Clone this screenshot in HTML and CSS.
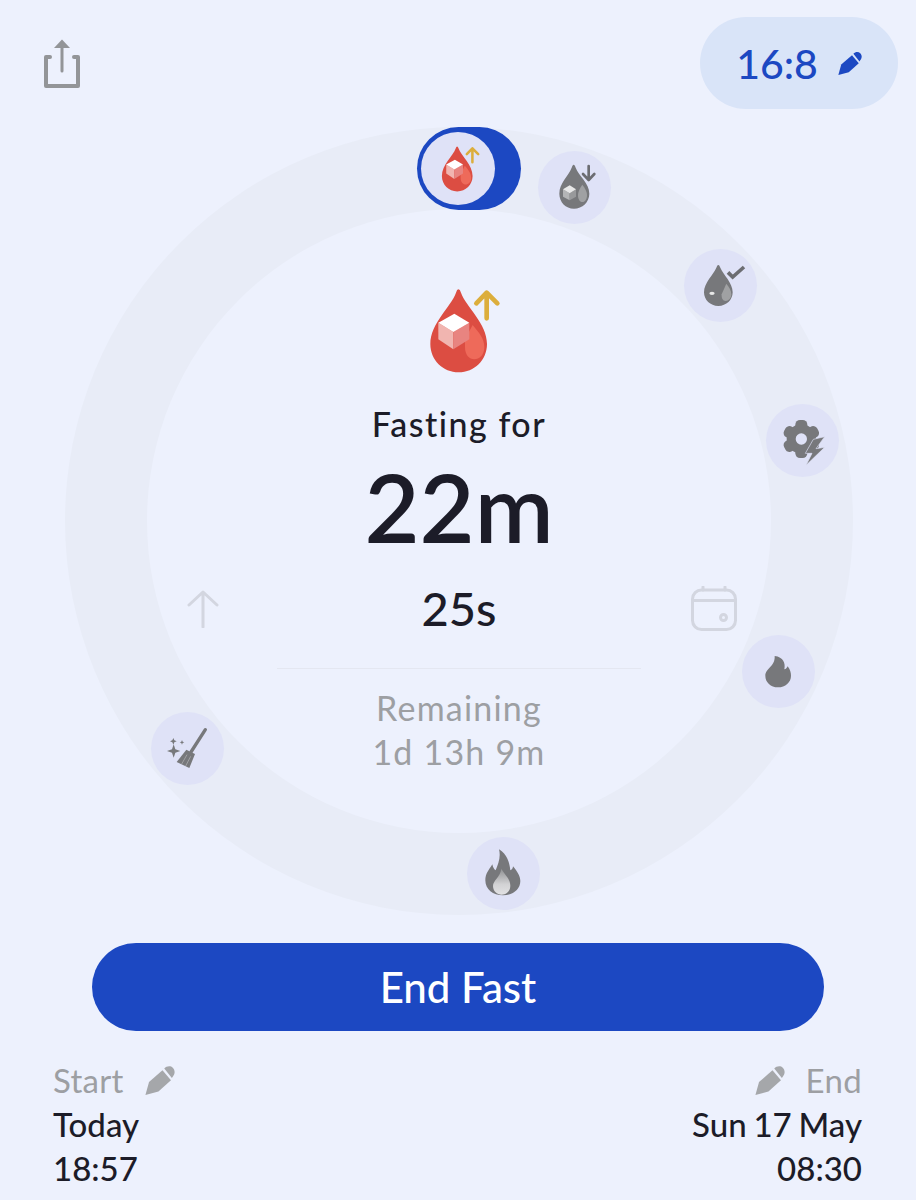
FILE: index.html
```html
<!DOCTYPE html>
<html lang="en">

<head>
    <meta charset="UTF-8">
    <meta name="viewport" content="width=device-width, initial-scale=1.0">
    <title>Fasting Timer</title>
    <link rel="stylesheet" href="styles.css">
</head>

<body>
    <svg class="defs" width="0" height="0">
        <defs>
            <linearGradient id="flame-glow" x1="0" y1="0" x2="0" y2="1">
                <stop offset="0" stop-color="#8f9092" />
                <stop offset="0.6" stop-color="#d2d2d4" />
                <stop offset="1" stop-color="#e2e2e4" />
            </linearGradient>
        </defs>
        <symbol id="pencil" viewBox="0 0 67 67">
            <path d="M1 67 L9 38 L39 12 L58 34 L30 59 Z" />
            <path d="M43 8 C48 2 57 1 62 6 C68 12 67 20 62 26 L60 29 Z" />
        </symbol>
        <symbol id="drop" viewBox="0 0 360 360">
            <path class="drop-body" d="M172 58 Q177 58 180 68 C195 110 258 160 258 222 C258 270 220 307 173 307 C126 307 88 270 88 222 C88 160 150 110 165 68 Q168 58 172 58 Z" />
            <path class="drop-side" d="M215 165 C235 190 250 205 250 232 C250 255 235 268 220 268 C205 268 192 255 192 232 L192 208 Z" />
            <path class="cube-left" d="M112 158 L157 186 L157 238 L112 208 Z" />
            <path class="cube-right" d="M157 186 L205 158 L205 208 L157 238 Z" />
            <path class="cube-top" d="M112 158 L160 131 L205 158 L157 186 Z" />
        </symbol>
    </svg>

    <div class="top-bar">
        <svg class="share" viewBox="40 36 44 56">
            <path class="share-box" d="M50 57 H46 V86 H78 V57 H74" />
            <path class="share-stem" d="M62 71 V45" />
            <path class="share-head" d="M62 39.5 L70 48 H54 Z" />
        </svg>
        <div class="plan">
            <span>16:8</span>
            <svg class="pencil-blue"><use href="#pencil" /></svg>
        </div>
    </div>

    <div class="ring">
        <div class="hole">
            <svg class="big-drop" viewBox="0 0 360 360">
                <use href="#drop" class="red" />
                <path class="arrow-gold" d="M257 145 V72 M226 100 L257 68 L289 100" />
            </svg>
            <div class="label">Fasting for</div>
            <div class="elapsed">22m</div>
            <div class="seconds">25s</div>
            <div class="divider"></div>
            <div class="remaining">Remaining</div>
            <div class="remaining">1d 13h 9m</div>
        </div>

        <svg class="hint hint-up" viewBox="0 0 32 38">
            <path d="M16 37 V2 M2 15 L16 2 L30 15" />
        </svg>
        <svg class="hint hint-calendar" viewBox="0 0 46 45">
            <rect x="1.5" y="4" width="43" height="39.5" rx="9" />
            <path d="M1.5 14.5 H44.5 M12 1 V4 M34 1 V4" />
            <circle cx="32.5" cy="31.5" r="3" />
        </svg>

        <div class="active-pill">
            <div class="active-dot">
                <svg class="small-drop" viewBox="0 0 360 360">
                    <use href="#drop" class="red" />
                    <path class="arrow-gold" d="M257 145 V72 M226 100 L257 68 L289 100" />
                </svg>
            </div>
        </div>

        <div class="node node-1">
            <svg viewBox="0 0 219 219">
                <path class="grey-fill" d="M107 41 C110 41 111 45 113 50 C122 75 154 95 154 128 C154 153 133 173 108 173 C83 173 64 153 64 128 C64 95 92 75 101 50 C103 45 104 41 107 41 Z" />
                <path class="grey-light" d="M133 101 C142 113 147 122 147 132 C147 145 141 153 133 153 C125 153 120 145 120 132 C120 122 125 113 133 101 Z" />
                <path class="grey-pale" d="M75 115 L95 127 L95 148 L75 137 Z" />
                <path class="grey-mid" d="M95 127 L114 115 L114 137 L95 148 Z" />
                <path class="white-fill" d="M75 115 L95 103 L114 115 L95 127 Z" />
                <path class="down-arrow" d="M152 45 V86 M135 69 L152 87 L169 69" />
            </svg>
        </div>
        <div class="node node-2">
            <svg viewBox="0 0 219 219">
                <path class="grey-fill" d="M103 48 C106 48 107 52 109 56 C118 78 146 100 146 130 C146 153 127 171 103 171 C79 171 60 153 60 130 C60 100 88 78 97 56 C99 52 100 48 103 48 Z" />
                <path class="grey-light" d="M127 104 C136 116 142 124 142 136 C142 148 134 156 125 156 C116 156 112 148 113 136 Z" />
                <ellipse class="white-fill" cx="84" cy="133" rx="8" ry="5" />
                <path class="check" d="M132 70 L146 84 L180 54" />
            </svg>
        </div>
        <div class="node node-3">
            <svg viewBox="0 0 219 219">
                <g class="grey-fill">
                    <circle cx="106" cy="105" r="44" />
                    <rect x="88" y="48" width="36" height="114" rx="14" />
                    <rect x="88" y="48" width="36" height="114" rx="14" transform="rotate(60 106 105)" />
                    <rect x="88" y="48" width="36" height="114" rx="14" transform="rotate(120 106 105)" />
                </g>
                <circle class="node-fill" cx="106" cy="105" r="17" />
                <path class="bolt" d="M176 98 L150 134 L176 130 L120 184 L138 148 L118 148 L142 106 Z" />
            </svg>
        </div>
        <div class="node node-4">
            <svg viewBox="0 0 219 219">
                <path class="grey-fill" d="M98 63 C124 66 131 85 127 103 C132 103 135 98 137 94 C145 104 147 115 147 122 C147 142 130 157 108 157 C86 157 70 142 70 122 C70 100 100 95 98 63 Z" />
            </svg>
        </div>
        <div class="node node-5">
            <svg viewBox="0 0 219 219">
                <path class="broom-handle" d="M163 53 L120 120" />
                <path class="grey-fill" d="M106 113 L132 126 L115 168 L77 150 Z" />
                <path class="broom-lines" d="M108 128 L92 156 M119 133 L104 162" />
                <path class="grey-fill" d="M68 97 L73 112 L88 117 L73 122 L68 137 L63 122 L48 117 L63 112 Z" />
                <path class="grey-fill" d="M67 78 L70 85 L77 88 L70 91 L67 98 L64 91 L57 88 L64 85 Z" />
                <path class="grey-fill" d="M93 84 L95 89 L100 91 L95 93 L93 98 L91 93 L86 91 L91 89 Z" />
            </svg>
        </div>
        <div class="node node-6">
            <svg viewBox="0 0 219 219">
                <path class="grey-fill" d="M96 37 C125 55 128 85 130 100 C136 98 138 92 138 88 C152 105 160 118 160 132 C160 158 136 175 108 175 C78 175 55 158 55 130 C55 110 65 100 76 82 C78 90 80 96 86 100 C94 80 102 60 96 37 Z" />
                <path class="flame-light" d="M103 95 C112 112 130 125 130 146 C130 162 118 173 104 173 C90 173 78 162 78 147 C78 130 100 120 103 95 Z" />
            </svg>
        </div>
    </div>

    <button class="end-button" type="button">End Fast</button>

    <div class="times">
        <div class="time-col">
            <div class="time-head">
                <span>Start</span>
                <svg class="pencil-grey"><use href="#pencil" /></svg>
            </div>
            <div class="time-value">Today</div>
            <div class="time-value">18:57</div>
        </div>
        <div class="time-col time-right">
            <div class="time-head">
                <svg class="pencil-grey"><use href="#pencil" /></svg>
                <span>End</span>
            </div>
            <div class="time-value">Sun 17 May</div>
            <div class="time-value">08:30</div>
        </div>
    </div>
</body>

</html>
```

FILE: styles.css
```css
/* Global Reset */
* {
    box-sizing: border-box;
    margin: 0;
    padding: 0;
}

body {
    font-family: Lato, "Open Sans", sans-serif;
    background-color: #edf1fd;
    color: #1c1c28;
    width: 916px;
    height: 1200px;
    padding-top: 17px;
    overflow: hidden;
}

.defs {
    position: absolute;
}

/* Top bar */
.top-bar {
    display: flex;
    justify-content: space-between;
    align-items: center;
    height: 92px;
    padding: 0 18px 0 40px;
}

.share {
    width: 44px;
    height: 56px;
    margin-top: 2px;
}

.share-box {
    fill: none;
    stroke: #939598;
    stroke-width: 4;
    stroke-linejoin: round;
    stroke-linecap: round;
}

.share-stem {
    stroke: #939598;
    stroke-width: 3;
    stroke-linecap: round;
}

.share-head {
    fill: #939598;
}

.plan {
    display: flex;
    align-items: center;
    justify-content: center;
    gap: 20px;
    width: 198px;
    height: 92px;
    border-radius: 46px;
    background-color: #d9e4f8;
    color: #1c48c2;
    font-size: 41px;
    font-weight: 500;
}

.pencil-blue {
    width: 24px;
    height: 24px;
    fill: #1c48c2;
}

/* Ring */
.ring {
    position: relative;
    display: flex;
    justify-content: center;
    align-items: center;
    width: 788px;
    height: 788px;
    margin: 18px 0 0 65px;
    border-radius: 50%;
    background-color: #e8ecf7;
}

.hole {
    display: flex;
    flex-direction: column;
    align-items: center;
    width: 624px;
    height: 624px;
    padding-top: 61px;
    border-radius: 50%;
    background-color: #edf1fd;
}

.big-drop {
    width: 120px;
    height: 120px;
    flex-shrink: 0;
    margin-left: 3px;
}

.red {
    --body: #dc4d42;
    --side: #ee6a5a;
    --left: #f1b5b0;
    --right: #e88480;
    --top: #ffffff;
}

.drop-body { fill: var(--body); }
.drop-side { fill: var(--side); }
.cube-left { fill: var(--left); }
.cube-right { fill: var(--right); }
.cube-top { fill: var(--top); }

.arrow-gold {
    fill: none;
    stroke: #dcae3c;
    stroke-width: 14;
    stroke-linecap: round;
    stroke-linejoin: round;
}

.label {
    margin-top: 12px;
    font-size: 34px;
    font-weight: 500;
    line-height: 44px;
    letter-spacing: 1.5px;
}

.elapsed {
    margin-top: 10px;
    font-size: 95px;
    font-weight: 600;
    line-height: 100px;
}

.seconds {
    margin-top: 27px;
    font-size: 47px;
    font-weight: 500;
    line-height: 50px;
}

.divider {
    flex-shrink: 0;
    width: 364px;
    height: 1px;
    margin-top: 35px;
    margin-bottom: 17px;
    background-color: #e4e7f1;
}

.remaining {
    font-size: 34px;
    line-height: 44px;
    letter-spacing: 1.2px;
    color: #9d9fa3;
}

/* Stage hints */
.hint {
    position: absolute;
    fill: none;
    stroke: #d3d6e0;
    stroke-width: 3;
    stroke-linecap: round;
    stroke-linejoin: round;
}

.hint-up {
    left: 122px;
    top: 463px;
    width: 32px;
    height: 38px;
}

.hint-calendar {
    left: 626px;
    top: 459px;
    width: 46px;
    height: 45px;
}

/* Stage nodes */
.active-pill {
    position: absolute;
    left: 352px;
    top: 0;
    width: 104px;
    height: 83px;
    padding: 5px 0 0 4px;
    border-radius: 42px;
    background-color: #1c48c2;
}

.active-dot {
    display: flex;
    align-items: center;
    justify-content: center;
    width: 74px;
    height: 73px;
    border-radius: 50%;
    background-color: #dfe2f7;
}

.small-drop {
    width: 65px;
    height: 65px;
}

.node {
    position: absolute;
    width: 73px;
    height: 73px;
    border-radius: 50%;
    background-color: #dfe2f7;
}

.node svg {
    display: block;
    width: 73px;
    height: 73px;
}

.node-1 { left: 473px; top: 24px; }
.node-2 { left: 619px; top: 122px; }
.node-3 { left: 701px; top: 277px; }
.node-4 { left: 677px; top: 508px; }
.node-5 { left: 86px; top: 585px; }
.node-6 { left: 402px; top: 710px; }

.grey-fill { fill: #77787b; }
.grey-light { fill: #a0a1a3; }
.grey-pale { fill: #b4b5b6; }
.grey-mid { fill: #98999b; }
.white-fill { fill: #e8e8e8; }
.node-fill { fill: #dfe2f7; }
.flame-light { fill: url(#flame-glow); }

.down-arrow {
    fill: none;
    stroke: #6c6d72;
    stroke-width: 8;
    stroke-linecap: round;
    stroke-linejoin: round;
}

.check {
    fill: none;
    stroke: #6c6d72;
    stroke-width: 11;
}

.bolt {
    fill: #77787b;
    stroke: #dfe2f7;
    stroke-width: 2;
}

.broom-handle {
    fill: none;
    stroke: #77787b;
    stroke-width: 10;
    stroke-linecap: round;
}

.broom-lines {
    fill: none;
    stroke: #a0a1a3;
    stroke-width: 3;
}

/* Button */
.end-button {
    display: block;
    width: 732px;
    height: 88px;
    margin: 28px 0 0 92px;
    border: none;
    border-radius: 44px;
    background-color: #1c48c2;
    color: #fff;
    font-family: inherit;
    font-size: 42px;
    font-weight: 500;
    cursor: pointer;
}

/* Start and end times */
.times {
    display: flex;
    justify-content: space-between;
    margin-top: 27px;
    padding: 0 54px 0 53px;
}

.time-col {
    display: flex;
    flex-direction: column;
}

.time-right {
    align-items: flex-end;
}

.time-head {
    display: flex;
    align-items: center;
    gap: 21px;
    height: 44px;
    font-size: 33px;
    letter-spacing: 0.3px;
    color: #9d9fa3;
}

.pencil-grey {
    width: 30px;
    height: 30px;
    fill: #a5a7aa;
}

.time-value {
    font-size: 33px;
    font-weight: 500;
    line-height: 44px;
    word-spacing: -1.5px;
}
```
